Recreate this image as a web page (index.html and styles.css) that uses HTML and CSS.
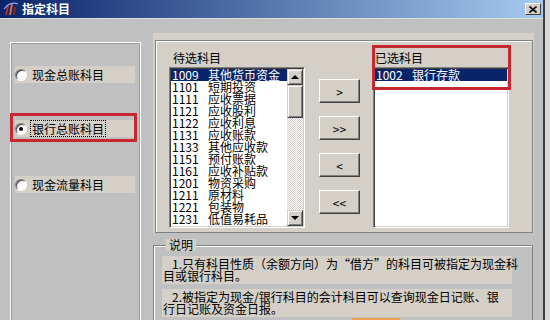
FILE: index.html
```html
<!DOCTYPE html>
<html lang="zh-CN">
<head>
  <meta charset="UTF-8" />
  <title>指定科目</title>
  <link rel="stylesheet" href="styles.css">
</head>
<body>
  <div class="window">
    <!-- Title Bar -->
    <div class="titlebar">
      <svg class="app-icon" width="16" height="14" viewBox="0 0 16 14">
        <path d="M2 13 L4 4 L6 4 L4 13 Z" fill="#a83828"/>
        <path d="M6 13 L8 2 L10 2 L8 13 Z" fill="#d8684c"/>
        <path d="M10 13 L11 5 L13 5 L12 13 Z" fill="#902818"/>
        <path d="M1 7 Q7 -1 15 2" stroke="#90a8f0" stroke-width="1.2" fill="none"/>
      </svg>
      <span class="title">指定科目</span>
      <div class="close-btn">
        <svg width="8" height="7" viewBox="0 0 8 7">
          <path d="M0.5 0.5 L7.5 6.5 M7.5 0.5 L0.5 6.5" stroke="#000" stroke-width="1.6"/>
        </svg>
      </div>
    </div>

    <div class="content">
      <!-- Account Kind -->
      <div class="kind-box">
        <div class="kind-item first">
          <span class="radio"></span><span class="kind-label">现金总账科目</span>
        </div>
        <div class="kind-item second marked">
          <span class="radio checked"></span><span class="kind-label focus">银行总账科目</span>
        </div>
        <div class="kind-item third">
          <span class="radio"></span><span class="kind-label">现金流量科目</span>
        </div>
      </div>

      <div class="main">
        <!-- Pick Lists -->
        <div class="pick-panel">
          <div class="pick-box">
            <div class="list-group">
              <div class="list-title">待选科目</div>
              <div class="listbox">
                <ul class="rows" id="sourceList"></ul>
                <div class="scrollbar">
                  <div class="scroll-btn"><span class="arrow-up"></span></div>
                  <div class="scroll-thumb"></div>
                  <div class="scroll-track"></div>
                  <div class="scroll-btn"><span class="arrow-down"></span></div>
                </div>
              </div>
            </div>

            <div class="move-buttons">
              <button class="move-btn">&gt;</button>
              <button class="move-btn">&gt;&gt;</button>
              <button class="move-btn">&lt;</button>
              <button class="move-btn">&lt;&lt;</button>
            </div>

            <div class="list-group picked marked">
              <div class="list-title">已选科目</div>
              <div class="listbox">
                <ul class="rows" id="pickedList"></ul>
              </div>
            </div>
          </div>
        </div>

        <!-- Notes -->
        <fieldset class="note-box">
          <legend class="note-title">说明</legend>
          <div class="note">1.只有科目性质（余额方向）为“借方”的科目可被指定为现金科<br>目或银行科目。</div>
          <div class="note">2.被指定为现金/银行科目的会计科目可以查询现金日记账、银<br>行日记账及资金日报。</div>
          <div class="note-btn"></div>
        </fieldset>
      </div>
    </div>
  </div>

  <script>
// Data
const sourceAccounts = [
  ["1009", "其他货币资金"],
  ["1101", "短期投资"],
  ["1111", "应收票据"],
  ["1121", "应收股利"],
  ["1122", "应收利息"],
  ["1131", "应收账款"],
  ["1133", "其他应收款"],
  ["1151", "预付账款"],
  ["1161", "应收补贴款"],
  ["1201", "物资采购"],
  ["1211", "原材料"],
  ["1221", "包装物"],
  ["1231", "低值易耗品"]
];
const pickedAccounts = [["1002", "银行存款"]];

// Render a list, first row selected
function renderRows(listId, accounts) {
  const list = document.getElementById(listId);
  accounts.forEach((acc, i) => {
    const li = document.createElement("li");
    li.className = `row ${i === 0 ? "selected" : ""}`;
    li.innerHTML = `<span class="code">${acc[0]}</span><span class="name">${acc[1]}</span>`;
    list.appendChild(li);
  });
}

renderRows("sourceList", sourceAccounts);
renderRows("pickedList", pickedAccounts);
  </script>
</body>
</html>
```

FILE: styles.css
```css
body {
  margin: 0;
  background: #d8d8d8;
  font-family: "Noto Sans CJK SC", sans-serif;
  font-size: 12px;
  color: #000;
}

.window {
  width: 543px;
  height: 320px;
  background: #c0c0c0;
  border-right: 2px solid #404040;
  overflow: hidden;
}

/* Title bar */
.titlebar {
  height: 18px;
  display: flex;
  align-items: center;
  padding: 0 2px 0 3px;
  background: linear-gradient(to right, #0a246a, #a6caf0);
  border-bottom: 1px solid #dcdcdc;
}

.app-icon {
  margin-right: 3px;
}

.title {
  flex: 1;
  color: #fff;
  font-weight: bold;
  line-height: 18px;
}

.close-btn {
  width: 16px;
  height: 12px;
  box-sizing: border-box;
  display: flex;
  align-items: center;
  justify-content: center;
  background: #d4d0c8;
  border: 1px solid;
  border-color: #fff #404040 #404040 #fff;
}

.content {
  display: flex;
  align-items: flex-start;
  padding-left: 10px;
}

/* Account kind box */
.kind-box {
  width: 131px;
  height: 300px;
  box-sizing: border-box;
  margin-top: 23px;
  padding: 23px 5px 0 4px;
  border: 1px solid #fff;
  box-shadow: inset 1px 1px 0 #9a9a9a, inset -1px -1px 0 #9a9a9a;
}

.kind-item {
  position: relative;
  display: flex;
  align-items: center;
  height: 17px;
  background: #d4d0c8;
}

.kind-item.second {
  margin-top: 37px;
}

.kind-item.third {
  margin-top: 39px;
}

.radio {
  position: relative;
  width: 12px;
  height: 12px;
  box-sizing: border-box;
  margin-right: 4px;
  border-radius: 50%;
  background: #fff;
  border: 1px solid;
  border-color: #808080 #fff #fff #808080;
  box-shadow: inset 1px 1px 0 #404040;
}

.radio.checked::after {
  content: "";
  position: absolute;
  left: 3px;
  top: 3px;
  width: 4px;
  height: 4px;
  border-radius: 50%;
  background: #000;
}

.kind-label {
  padding: 0 1px;
  line-height: 15px;
}

.kind-label.focus {
  outline: 1px dotted #000;
}

.marked::after {
  content: "";
  position: absolute;
  border: 3px solid #c62832;
  pointer-events: none;
}

.kind-item.marked::after {
  top: -7px;
  bottom: -5px;
  left: -5px;
  right: -2px;
}

/* Pick panel */
.main {
  width: 381px;
  margin-left: 12px;
}

.pick-panel {
  margin-top: 14px;
  padding: 7px 1px 0 2px;
  background: #d4d0c8;
}

.pick-box {
  height: 193px;
  box-sizing: border-box;
  display: flex;
  align-items: flex-start;
  padding: 11px 0 0 13px;
  border: 1px solid #808080;
  box-shadow: inset 1px 1px 0 #fff;
}

.list-group {
  position: relative;
  width: 136px;
}

.list-title {
  height: 12px;
  line-height: 12px;
  margin-bottom: 3px;
  padding-left: 4px;
}

.picked .list-title {
  padding-left: 2px;
}

.listbox {
  display: flex;
  height: 161px;
  box-sizing: border-box;
  padding: 1px;
  background: #fff;
  border: 1px solid;
  border-color: #808080 #fff #fff #808080;
  box-shadow: inset 1px 1px 0 #404040, inset -1px -1px 0 #d4d0c8;
}

.rows {
  flex: 1;
  list-style: none;
  margin: 0;
  padding: 0;
}

.row {
  display: flex;
  height: 12px;
  line-height: 12px;
  padding-left: 1px;
  white-space: nowrap;
}

.row.selected {
  background: #0a246a;
  color: #fff;
}

.code {
  width: 36px;
}

.scrollbar {
  width: 16px;
  display: flex;
  flex-direction: column;
}

.scroll-btn,
.scroll-thumb {
  box-sizing: border-box;
  background: #d4d0c8;
  border: 1px solid;
  border-color: #d4d0c8 #404040 #404040 #d4d0c8;
  box-shadow: inset 1px 1px 0 #fff, inset -1px -1px 0 #808080;
}

.scroll-btn {
  height: 16px;
  display: flex;
  align-items: center;
  justify-content: center;
}

.scroll-thumb {
  height: 33px;
}

.scroll-track {
  flex: 1;
  background: repeating-conic-gradient(#d4d0c8 0 25%, #fff 0 50%) 0 0 / 2px 2px;
}

.arrow-up,
.arrow-down {
  width: 0;
  height: 0;
  border-left: 4px solid transparent;
  border-right: 4px solid transparent;
}

.arrow-up {
  border-bottom: 4px solid #000;
}

.arrow-down {
  border-top: 4px solid #000;
}

.move-buttons {
  display: flex;
  flex-direction: column;
  gap: 13px;
  margin: 27px 13px 0 14px;
}

.move-btn {
  width: 41px;
  height: 24px;
  padding: 0;
  font-family: "Noto Sans CJK SC", sans-serif;
  font-size: 12px;
  color: #000;
  background: #d4d0c8;
  border: 1px solid;
  border-color: #fff #404040 #404040 #fff;
  box-shadow: inset -1px -1px 0 #808080;
}

.list-group.marked::after {
  top: -7px;
  left: -1px;
  width: 139px;
  height: 45px;
  box-sizing: border-box;
}

/* Notes */
.note-box {
  margin: 6px 0 0;
  padding: 0 0 0 8px;
  width: 380px;
  box-sizing: border-box;
  border: 1px solid #808080;
  box-shadow: inset 1px 1px 0 #fff;
}

.note-title {
  margin-left: 4px;
  padding: 0 3px;
  line-height: 12px;
  background: #d4d0c8;
}

.note {
  width: 350px;
  box-sizing: border-box;
  margin-top: 5px;
  padding: 2px 0 2px 1px;
  line-height: 12px;
  text-indent: 9px;
  white-space: nowrap;
  background: #d4d0c8;
}

.note-btn {
  width: 48px;
  height: 20px;
  margin: 1px 0 0 190px;
  background: #f0a050;
}
```
